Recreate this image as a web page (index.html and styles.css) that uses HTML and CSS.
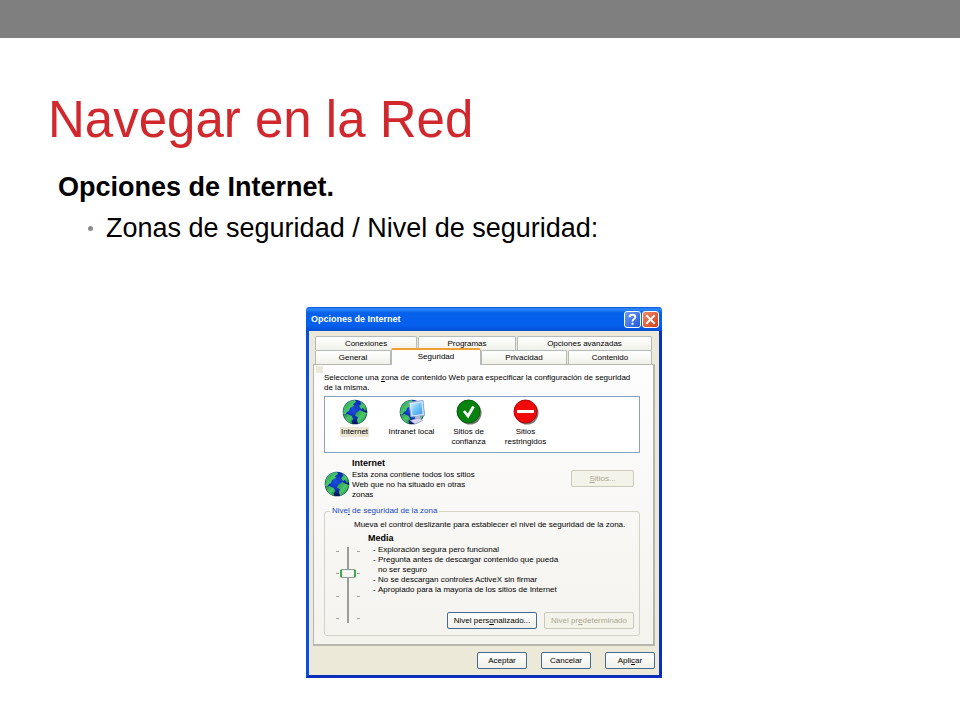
FILE: index.html
```html
<!DOCTYPE html>
<html lang="es">
  <head>
    <meta charset="UTF-8" />
    <meta name="viewport" content="width=device-width, initial-scale=1.0" />
    <title>Navegar en la Red</title>
    <link rel="stylesheet" href="styles.css">
  </head>
  <body>
    <!-- shared globe drawing -->
    <svg class="defs" width="0" height="0" aria-hidden="true">
      <defs>
        <radialGradient id="sea" cx="45%" cy="40%" r="60%">
          <stop offset="0" stop-color="#1c50e0" />
          <stop offset="0.6" stop-color="#0c2cb4" />
          <stop offset="1" stop-color="#06104e" />
        </radialGradient>
        <linearGradient id="land" x1="0" y1="0" x2="1" y2="1">
          <stop offset="0" stop-color="#2c8a48" />
          <stop offset="0.5" stop-color="#48c868" />
          <stop offset="1" stop-color="#1d8d38" />
        </linearGradient>
        <linearGradient id="screen" x1="0" y1="0" x2="1" y2="1">
          <stop offset="0" stop-color="#d4f2ff" />
          <stop offset="0.5" stop-color="#6cc4f8" />
          <stop offset="1" stop-color="#3f96e5" />
        </linearGradient>
        <symbol id="globe" viewBox="0 0 26 26">
          <circle cx="13" cy="13" r="12.300" fill="url(#sea)" />
          <path fill="url(#land)" d="M1.500 9C3 4 8 1 13 1l1 2-3 2 1 2-4 2-1 3-2 1-2 3-2-1z" />
          <path fill="url(#land)" d="M1.500 16l4-1 4 2 2 3-2 2 1 3C6 24 3 21 1.500 16z" />
          <path fill="url(#land)" d="M18 2c4 2 6 5 7 9l-2 1-2-3-2 1-2-3 2-2z" />
          <path fill="url(#land)" d="M14 14l4-3 4 2 3 1c-1 5-4 9-9 11l-1-4 1-3-3-1z" />
          <path fill="#1740c8" d="M12 8l4-1 2 3-4 2z" />
        </symbol>
      </defs>
    </svg>

    <div class="top-bar"></div>

    <main class="slide">
      <h1>Navegar en la Red</h1>
      <h2>Opciones de Internet.</h2>
      <ul class="points">
        <li>Zonas de seguridad / Nivel de seguridad:</li>
      </ul>

      <section class="dialog" aria-labelledby="dialog-title">
        <header class="title-bar">
          <h3 id="dialog-title">Opciones de Internet</h3>
          <button class="win-btn" type="button" aria-label="Ayuda">
            <svg viewBox="0 0 16 16"><path d="M5 5.500C5 2 11 2 11 5.500c0 2-3 2-3 4.500M8 11.500v2" /></svg>
          </button>
          <button class="win-btn close" type="button" aria-label="Cerrar">
            <svg viewBox="0 0 16 16"><path d="M3.500 3.500l9 9M12.500 3.500l-9 9" /></svg>
          </button>
        </header>

        <div class="dialog-body">
          <nav class="tabs">
            <div class="tab-row back">
              <button type="button">Conexiones</button>
              <button type="button">Programas</button>
              <button type="button">Opciones avanzadas</button>
            </div>
            <div class="tab-row front">
              <button type="button">General</button>
              <button class="active" type="button">Seguridad</button>
              <button type="button">Privacidad</button>
              <button type="button">Contenido</button>
            </div>
          </nav>

          <div class="panel">
            <p class="intro">Seleccione una <u>z</u>ona de contenido Web para especificar la configuración de seguridad de la misma.</p>

            <div class="zones">
              <button class="zone selected" type="button">
                <svg viewBox="0 0 26 26"><use href="#globe" /></svg>
                <span>Internet</span>
              </button>
              <button class="zone" type="button">
                <svg viewBox="0 0 26 26">
                  <svg x="0" y="0" width="17" height="17"><use href="#globe" /></svg>
                  <path d="M10 3.500L24 1.500l1.500 15L12 18z" fill="#dfe8f8" stroke="#86a4d8" />
                  <path d="M12 5l10.500-1.500 1 11.500-10 1.500z" fill="url(#screen)" />
                  <path d="M16 17.500l5-.5 1 3-5 1z" fill="#b8b8dd" />
                  <path d="M11 21.500l9-2.500 4 2.500-8 3.500z" fill="#d8d4f2" stroke="#9a98cc" stroke-width=".6" />
                </svg>
                <span>Intranet local</span>
              </button>
              <button class="zone" type="button">
                <svg viewBox="0 0 26 26">
                  <circle cx="14" cy="14" r="11.500" fill="#777" />
                  <circle cx="12.500" cy="12.500" r="11.500" fill="#07820f" stroke="#075c0b" />
                  <path d="M8 12l4 5 5.500-9.500" fill="none" stroke="#fff" stroke-width="2.800" />
                </svg>
                <span>Sitios de confianza</span>
              </button>
              <button class="zone" type="button">
                <svg viewBox="0 0 26 26">
                  <circle cx="14" cy="14" r="11.500" fill="#777" />
                  <circle cx="12.500" cy="12.500" r="11.500" fill="#f20a0a" stroke="#a80808" />
                  <path d="M4 12.500h17" stroke="#fff" stroke-width="3" />
                </svg>
                <span>Sitios restringidos</span>
              </button>
            </div>

            <div class="zone-info">
              <svg viewBox="0 0 26 26"><use href="#globe" /></svg>
              <div class="zone-text">
                <h4>Internet</h4>
                <p>Esta zona contiene todos los sitios Web que no ha situado en otras zonas</p>
              </div>
              <button class="btn wide" type="button" disabled><span><u>S</u>itios...</span></button>
            </div>

            <fieldset class="level">
              <legend><label for="level">Nive<u>l</u> de seguridad de la zona</label></legend>
              <p class="hint">Mueva el control deslizante para establecer el nivel de seguridad de la zona.</p>
              <div class="level-row">
                <div class="slider">
                  <div class="ticks"><i></i><i></i><i></i><i></i></div>
                  <input type="range" id="level" min="0" max="3" value="1">
                  <div class="ticks"><i></i><i></i><i></i><i></i></div>
                </div>
                <div class="level-text">
                  <h4>Media</h4>
                  <ul>
                    <li>Exploración segura pero funcional</li>
                    <li>Pregunta antes de descargar contenido que pueda<br>no ser seguro</li>
                    <li>No se descargan controles ActiveX sin firmar</li>
                    <li>Apropiado para la mayoría de los sitios de Internet</li>
                  </ul>
                </div>
              </div>
              <div class="level-buttons">
                <button class="btn" type="button"><span>Nivel pers<u>o</u>nalizado...</span></button>
                <button class="btn" type="button" disabled><span>Nivel pr<u>e</u>determinado</span></button>
              </div>
            </fieldset>
          </div>

          <footer class="actions">
            <button class="btn" type="button">Aceptar</button>
            <button class="btn" type="button">Cancelar</button>
            <button class="btn" type="button"><span>Apli<u>c</u>ar</span></button>
          </footer>
        </div>
      </section>
    </main>
  </body>
</html>
```

FILE: styles.css
```css
* {
  margin: 0;
  padding: 0;
  box-sizing: border-box;
}

body {
  min-height: 100vh;
  background: white;
  color: black;
  font-family: "Liberation Sans", Arial, sans-serif;
}

.defs {
  position: absolute;
}

.top-bar {
  height: 38px;
  background: #7f7f7f;
}

.slide {
  padding: 52px 40px 40px 48px;
}

h1 {
  font-size: 51px;
  line-height: 60px;
  font-weight: normal;
  color: #d1282e;
}

h2 {
  margin-top: 20px;
  padding-left: 10px;
  font-size: 27px;
  line-height: 34px;
}

.points {
  padding: 7px 0 0 40px;
  list-style: none;
  font-size: 27px;
  line-height: 34px;
}

.points li {
  display: flex;
  align-items: center;
  gap: 13px;
}

.points li::before {
  content: "";
  width: 5px;
  height: 5px;
  border-radius: 50%;
  background: #8c8c8c;
}

/* dialog */
.dialog {
  width: 100%;
  max-width: 356px;
  margin: 62px auto 0;
  border: 3px solid #0a3fc8;
  border-color: #0a3fc8 #0a2fb8 #0a2fb8 #0a4fd8;
  border-top: none;
  border-radius: 4px 4px 0 0;
  background: #ece9d8;
  font-size: 8px;
  line-height: 10px;
}

.dialog button {
  font: inherit;
  color: inherit;
}

.title-bar {
  display: flex;
  align-items: center;
  gap: 1px;
  height: 24px;
  margin: 0 -3px;
  padding: 0 3px 0 5px;
  border-radius: 4px 4px 0 0;
  background: linear-gradient(#0a50d0 0%, #2f8bff 8%, #0560ea 25%, #0560ee 75%, #0450d4 100%);
}

.title-bar h3 {
  flex: 1;
  font-size: 9px;
  color: white;
}

.dialog .win-btn {
  width: 17px;
  height: 17px;
  border: 1px solid white;
  border-radius: 3px;
  background: linear-gradient(135deg, #6d9bf5, #2158dc);
}

.dialog .win-btn.close {
  background: linear-gradient(135deg, #f08a68, #d33c16);
}

.win-btn svg {
  display: block;
  width: 100%;
  fill: none;
  stroke: white;
  stroke-width: 2;
}

.dialog-body {
  padding: 5px 4px 6px;
}

.tabs {
  padding: 0 3px 0 2px;
}

.tab-row {
  display: grid;
  gap: 1px;
}

.tab-row.back {
  grid-template-columns: 102fr 98fr 135fr;
}

.tab-row.front {
  grid-template-columns: 76fr 88fr 86fr 84fr;
}

.tab-row button {
  height: 14px;
  border: 1px solid #b4bab8;
  border-bottom: none;
  border-radius: 2px 2px 0 0;
  background: linear-gradient(white, #f1f1ea);
}

.tab-row .active {
  height: 17px;
  margin: -2px -1px -1px;
  padding-bottom: 2px;
  border-top: 2px solid #f0a030;
  background: #fdfdfd;
  z-index: 1;
}

/* the small square is the faint corner mark above the intro text */
.panel {
  padding: 8px 13px 8px 10px;
  border: 1px solid #b5b6ac;
  border-width: 1px 2px 2px 1px;
  background:
    linear-gradient(#ece9d8, #ece9d8) 2px 1px / 7px 7px no-repeat,
    linear-gradient(#fdfdfe, #f4f3ee);
}

.zones {
  display: flex;
  margin-top: 3px;
  padding: 2px 1px 5px;
  border: 1px solid #8ba0bf;
  background: white;
}

.zone {
  width: 57px;
  display: flex;
  flex-direction: column;
  align-items: center;
  gap: 2px;
  border: none;
  background: none;
}

.zone svg,
.zone-info svg {
  width: 26px;
  height: 26px;
}

.zone span {
  padding: 0 1px;
}

.zone.selected span {
  background: #ece5d3;
}

.zone-info {
  display: flex;
  align-items: center;
  gap: 2px;
  margin-top: 4px;
}

.zone-info svg {
  margin-top: 11px;
}

.zone-text {
  flex: 1;
}

.zone-text p {
  max-width: 132px;
}

h4 {
  font-size: 9px;
  line-height: 13px;
}

.btn {
  height: 17px;
  min-width: 50px;
  border: 1px solid #456a90;
  border-radius: 2px;
  background: linear-gradient(white, #f0efe8);
}

.btn:disabled {
  border-color: #cbc9b8;
  background: #f4f3ea;
}

.dialog .btn:disabled {
  color: #aaa894;
}

.btn.wide {
  width: 63px;
  margin-right: 6px;
}

.level {
  margin-top: 6px;
  padding: 4px 5px 6px 11px;
  border: 1px solid #d4d2c6;
  border-radius: 3px;
}

.level legend {
  margin-left: -6px;
  padding: 0 2px;
  color: #1746c8;
}

.hint {
  padding-left: 18px;
}

.level-row {
  display: flex;
  gap: 8px;
  margin-top: 2px;
}

.slider {
  display: flex;
  height: 76px;
  margin-top: 15px;
}

.slider input {
  width: 18px;
  height: 76px;
  writing-mode: vertical-lr;
  appearance: none;
  background: linear-gradient(#9d9c99, #9d9c99) center / 2px 100% no-repeat;
}

.slider input::-webkit-slider-thumb {
  appearance: none;
  width: 16px;
  height: 9px;
  border: 1px solid #8a9a94;
  border-left: 2px solid #39ad4a;
  border-right: 2px solid #39ad4a;
  border-radius: 2px;
  background: #f5f5f1;
}

.ticks {
  display: flex;
  flex-direction: column;
  justify-content: space-between;
  padding: 4px 0;
}

.ticks i {
  width: 3px;
  height: 1px;
  background: #a5a49c;
}

.level-text ul {
  padding-left: 5px;
  list-style: none;
}

.level-text li {
  display: flow-root;
  padding-left: 5px;
}

.level-text li::before {
  content: "-";
  float: left;
  margin-left: -5px;
}

.level-buttons {
  display: flex;
  justify-content: flex-end;
  gap: 7px;
  margin-top: -11px;
}

.level-buttons .btn {
  width: 90px;
}

.actions {
  display: flex;
  justify-content: flex-end;
  gap: 14px;
  margin-top: 6px;
}
```
